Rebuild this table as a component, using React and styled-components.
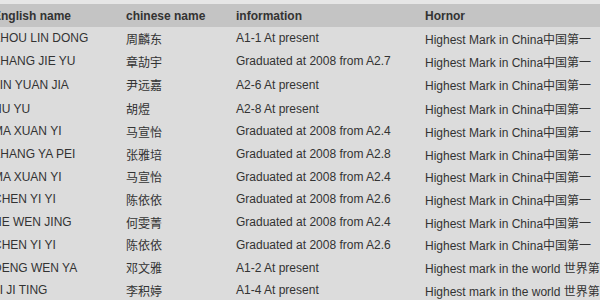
import React from "react";
import styled, { createGlobalStyle } from "styled-components";

const students = [
  { en: "ZHOU LIN DONG", cn: "周麟东", info: "A1-1 At present", honor: "Highest Mark in China中国第一" },
  { en: "ZHANG JIE YU", cn: "章劼宇", info: "Graduated at 2008 from A2.7", honor: "Highest Mark in China中国第一" },
  { en: "LIN YUAN JIA", cn: "尹远嘉", info: "A2-6 At present", honor: "Highest Mark in China中国第一", tall: true },
  { en: "HU YU", cn: "胡煜", info: "A2-8 At present", honor: "Highest Mark in China中国第一" },
  { en: "MA XUAN YI", cn: "马宣怡", info: "Graduated at 2008 from A2.4", honor: "Highest Mark in China中国第一" },
  { en: "ZHANG YA PEI", cn: "张雅培", info: "Graduated at 2008 from A2.8", honor: "Highest Mark in China中国第一" },
  { en: "MA XUAN YI", cn: "马宣怡", info: "Graduated at 2008 from A2.4", honor: "Highest Mark in China中国第一" },
  { en: "CHEN YI YI", cn: "陈依依", info: "Graduated at 2008 from A2.6", honor: "Highest Mark in China中国第一" },
  { en: "HE WEN JING", cn: "何雯菁", info: "Graduated at 2008 from A2.4", honor: "Highest Mark in China中国第一" },
  { en: "CHEN YI YI", cn: "陈依依", info: "Graduated at 2008 from A2.6", honor: "Highest Mark in China中国第一" },
  { en: "DENG WEN YA", cn: "邓文雅", info: "A1-2 At present", honor: "Highest mark in the world 世界第一" },
  { en: "LI JI TING", cn: "李积婷", info: "A1-4 At present", honor: "Highest mark in the world 世界第一" },
];

const GlobalStyle = createGlobalStyle`
  html, body {
    margin: 0;
    padding: 0;
    background: #e6e6e6;
    overflow: hidden;
  }
  body {
    font-family: "Liberation Sans", Arial, "Noto Sans CJK SC", sans-serif;
    font-size: 12px;
    color: #333;
  }
`;

const Page = styled.div`
  width: 600px;
  height: 300px;
  overflow: hidden;
  padding-top: 4px;
  box-sizing: border-box;
`;

const Table = styled.table`
  margin-left: -7px;
  width: 640px;
  border-collapse: collapse;
  table-layout: fixed;
  background: #dcdcdc;
  white-space: nowrap;
`;

const HeadRow = styled.tr`
  height: 23px;
  background: #c4c4c4;
`;

const HeadCell = styled.th`
  padding: 0;
  text-align: left;
  font-weight: bold;
  color: #333;
`;

const Row = styled.tr`
  height: ${(p) => (p.$tall ? "25px" : "22.7px")};
`;

const Cell = styled.td`
  padding: 0;
  overflow: visible;
`;

export default function App() {
  return (
    <>
      <GlobalStyle />
      <Page>
        <Table>
          <colgroup>
            <col style={{ width: 133 }} />
            <col style={{ width: 110 }} />
            <col style={{ width: 189 }} />
            <col />
          </colgroup>
          <thead>
            <HeadRow>
              <HeadCell>English name</HeadCell>
              <HeadCell>chinese name</HeadCell>
              <HeadCell>information</HeadCell>
              <HeadCell>Hornor</HeadCell>
            </HeadRow>
          </thead>
          <tbody>
            {students.map((s, i) => (
              <Row key={i} $tall={s.tall}>
                <Cell>{s.en}</Cell>
                <Cell>{s.cn}</Cell>
                <Cell>{s.info}</Cell>
                <Cell>{s.honor}</Cell>
              </Row>
            ))}
          </tbody>
        </Table>
      </Page>
    </>
  );
}
